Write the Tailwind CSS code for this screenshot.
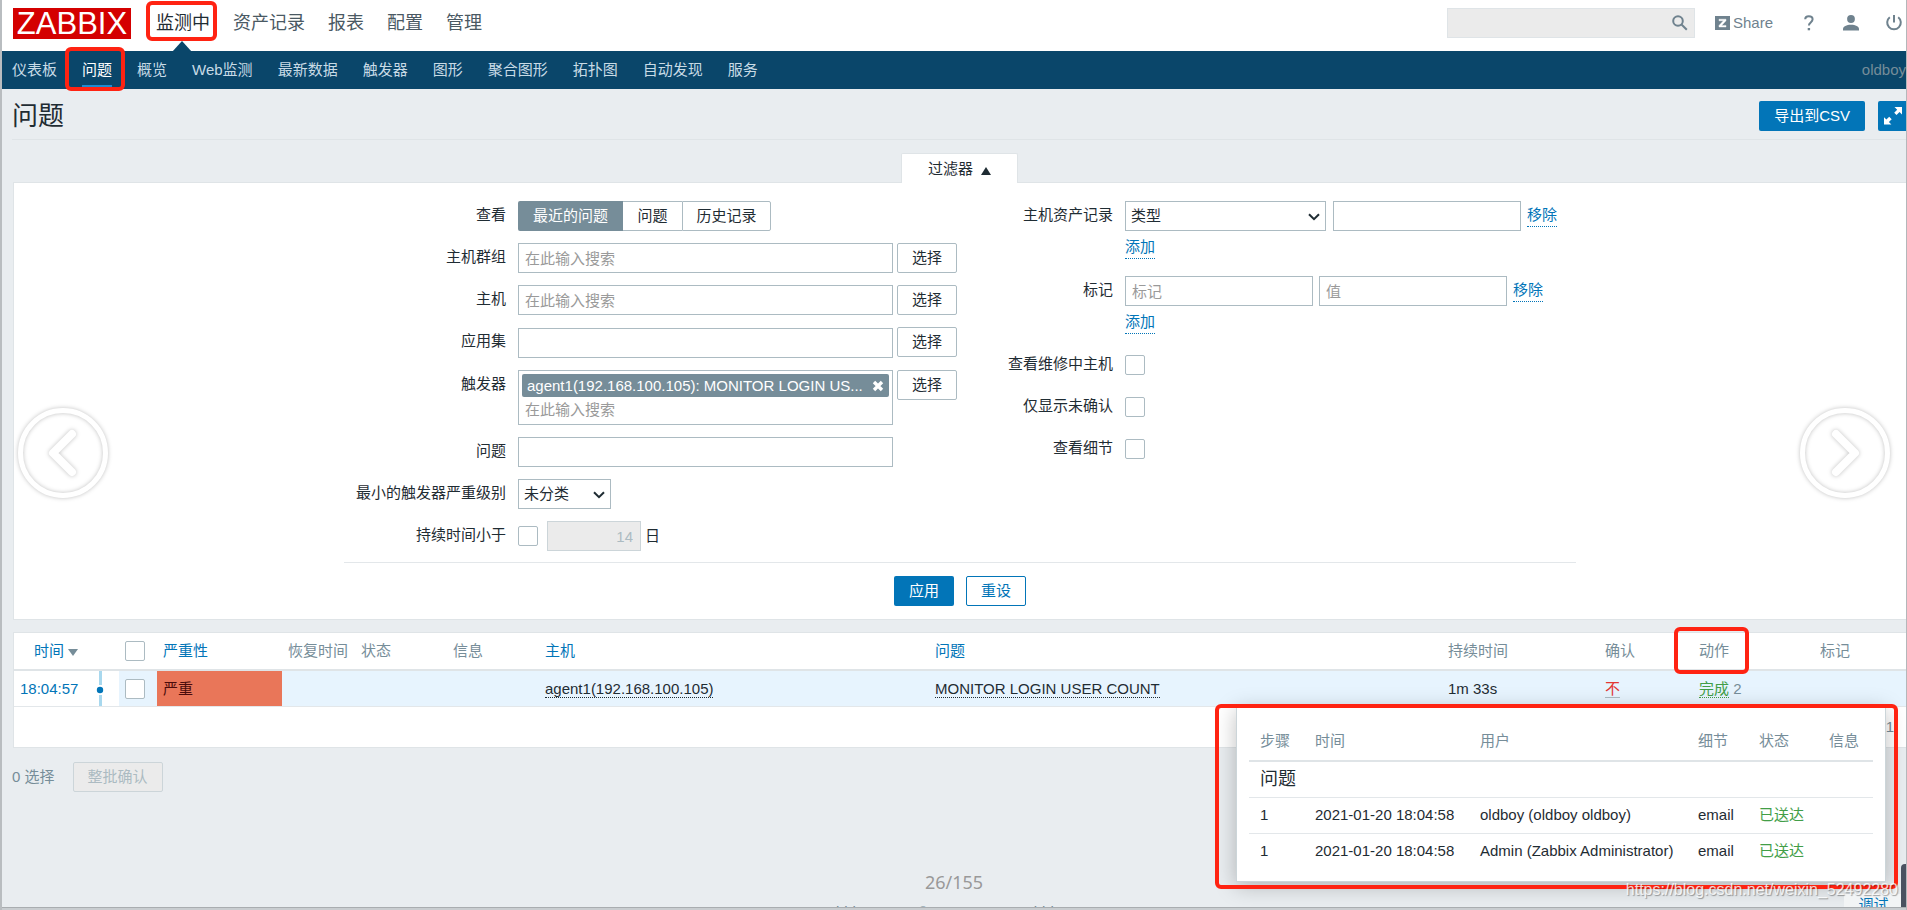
<!DOCTYPE html>
<html lang="zh-CN">
<head>
<meta charset="utf-8">
<title>问题</title>
<script src="https://cdn.jsdelivr.net/npm/@tailwindcss/browser@4"></script>
</head>
<body class="font-['Liberation_Sans','Noto_Sans_CJK_SC',sans-serif] text-[15px] leading-5 text-[#1f2c33]">
<div class="relative flex h-screen flex-col overflow-hidden border-l-2 border-r border-l-[#b9bdc0] border-r-[#b4b7ba] bg-[#e9edf0]">

  <header class="flex h-[51px] shrink-0 items-center bg-white pr-[3px] pl-[11px]">
    <a href="#" class="-mt-1 flex h-[31px] w-[118px] shrink-0 items-center justify-center bg-[#d40000] text-[31px] leading-none text-white">ZABBIX</a>
    <nav class="-mt-[6px] ml-[25px] flex gap-[23px] text-lg text-[#4a5963]">
      <a href="#" class="relative text-[#1f2c33]">监测中
        <svg class="absolute top-8 left-4" width="20" height="11" viewBox="0 0 20 11"><path d="M10 0 20 11H0z" fill="#0a466a"/></svg></a>
      <a href="#">资产记录</a>
      <a href="#">报表</a>
      <a href="#">配置</a>
      <a href="#">管理</a>
    </nav>
    <div class="-mt-[6px] ml-auto flex items-center text-[#6f828e]">
      <div class="relative">
        <input type="text" aria-label="搜索" class="block h-[30px] w-[248px] border border-[#dfe4e7] bg-[#ebebeb] px-2">
        <button type="button" aria-label="搜索" class="absolute top-1.5 right-1.5">
          <svg width="18" height="18" viewBox="0 0 18 18" fill="none" stroke="#6f828e" stroke-width="2"><circle cx="7" cy="7" r="4.8"/><path d="m10.500 10.500 5.300 5.300"/></svg>
        </button>
      </div>
      <a href="#" class="ml-5 flex items-center gap-[3px] text-[15px]">
        <svg width="15" height="14" viewBox="0 0 15 14"><path d="M0 0h15v14H0z" fill="#6f828e"/><path d="M4 3.200h7v1.600L6.600 9.400H11V11H4V9.400l4.400-4.600H4z" fill="#fff" stroke="#fff" stroke-width=".4"/></svg>
        Share</a>
      <button type="button" aria-label="帮助" class="ml-[31px]">
        <svg width="10" height="16" viewBox="0 0 10 16"><path d="M1.200 4.300C1.200 2.200 2.700 1.200 4.800 1.200s3.800 1.100 3.800 3.100c0 3-3.700 3.200-3.700 6.100" fill="none" stroke="#6f828e" stroke-width="2"/><path d="M3.700 13h2.400v2.300H3.700z" fill="#6f828e"/></svg>
      </button>
      <button type="button" aria-label="用户" class="ml-7">
        <svg width="18" height="16" viewBox="0 0 18 16" fill="#6f828e"><circle cx="9" cy="4" r="3.900"/><path d="M1 15.500v-1.500c0-2.600 3.500-4.200 8-4.200s8 1.600 8 4.200v1.500z"/></svg>
      </button>
      <button type="button" aria-label="退出" class="ml-[25px]">
        <svg width="18" height="18" viewBox="0 0 18 18" fill="none" stroke="#6f828e" stroke-width="2"><path d="M9 1v7.500M4.800 3.200a6.800 6.800 0 1 0 8.400 0"/></svg>
      </button>
    </div>
  </header>

  <nav class="flex h-[38px] shrink-0 items-center gap-[25px] bg-[#0a466a] pl-2.5 text-[#c8dbe6]">
    <a href="#">仪表板</a>
    <a href="#" class="relative text-white">问题<span class="absolute inset-x-0 top-[25px] h-0.5 bg-[#1f8bd0]"></span></a>
    <a href="#">概览</a>
    <a href="#">Web监测</a>
    <a href="#">最新数据</a>
    <a href="#">触发器</a>
    <a href="#">图形</a>
    <a href="#">聚合图形</a>
    <a href="#">拓扑图</a>
    <a href="#">自动发现</a>
    <a href="#">服务</a>
    <span class="ml-auto text-[#768d99]">oldboy</span>
  </nav>

  <div class="ml-2.5 flex h-[51px] shrink-0 items-center border-b border-[#dfe4e7]">
    <h1 class="pt-1 text-[26px] leading-8">问题</h1>
    <div class="mt-1 ml-auto flex gap-[13px]">
      <button type="button" class="h-[30px] rounded-xs bg-[#0275b8] px-[15px] text-white">导出到CSV</button>
      <button type="button" aria-label="全屏" class="h-[30px] w-7 rounded-l-xs bg-[#0275b8]">
        <svg class="ml-1.5" width="18" height="18" viewBox="0 0 18 18" fill="#fff"><path d="M10.500 0H18v7.500l-2.500-2.500-3 3-2.300-2.300 3-3zM0 10.300l2.400 2.300 2.800-2.800 2.500 2.500-2.800 2.800 2.500 2.500H0z"/></svg>
      </button>
    </div>
  </div>

  <section class="ml-[11px] shrink-0 pt-[13px]">
    <div class="flex justify-center">
      <button type="button" class="relative z-10 -mb-px flex h-[30px] w-[117px] items-center justify-center gap-2 rounded-t-xs border border-b-0 border-[#dfe4e7] bg-white">过滤器
        <svg class="mt-1" width="10" height="8" viewBox="0 0 10 8"><path d="M5 0l5 8H0z" fill="#1f2c33"/></svg></button>
    </div>
    <form class="border border-r-0 border-[#dfe4e7] bg-white pt-[18px]">
      <div class="mx-auto grid max-w-[1232px] grid-cols-2 border-b border-[#e3e7ea] pb-[11px]">
        <div class="grid grid-cols-[162px_1fr] content-start gap-x-3 gap-y-3">
          <span class="pt-1 text-right">查看</span>
          <div class="flex h-[30px]">
            <button type="button" class="w-[105px] rounded-l-xs bg-[#768d99] text-white">最近的问题</button>
            <button type="button" class="w-[59px] border-y border-[#acbbc2]">问题</button>
            <button type="button" class="w-[89px] rounded-r-xs border border-[#acbbc2]">历史记录</button>
          </div>
          <label for="groups" class="pt-1 text-right">主机群组</label>
          <div class="flex gap-1">
            <input id="groups" type="text" placeholder="在此输入搜索" class="h-[30px] w-[375px] border border-[#acbbc2] px-1.5 placeholder:text-[#9a9a9a]">
            <button type="button" class="h-[30px] w-[60px] rounded-xs border border-[#acbbc2]">选择</button>
          </div>
          <label for="hosts" class="pt-1 text-right">主机</label>
          <div class="flex gap-1">
            <input id="hosts" type="text" placeholder="在此输入搜索" class="h-[30px] w-[375px] border border-[#acbbc2] px-1.5 placeholder:text-[#9a9a9a]">
            <button type="button" class="h-[30px] w-[60px] rounded-xs border border-[#acbbc2]">选择</button>
          </div>
          <label for="app" class="pt-1 text-right">应用集</label>
          <div class="flex h-[31px] items-end gap-1">
            <input id="app" type="text" class="h-[30px] w-[375px] border border-[#acbbc2] px-1.5">
            <button type="button" class="h-[30px] w-[60px] self-start rounded-xs border border-[#acbbc2]">选择</button>
          </div>
          <label for="triggers" class="pt-1 text-right">触发器</label>
          <div class="flex items-start gap-1">
            <div class="h-[55px] w-[375px] border border-[#acbbc2] p-[3px]">
              <div class="flex h-[23px] items-center justify-between rounded-xs bg-[#768d99] px-[5px] text-white">
                <span>agent1(192.168.100.105): MONITOR LOGIN US...</span>
                <button type="button" aria-label="移除"><svg width="12" height="12" viewBox="0 0 12 12"><path d="m2 2 8 8M10 2l-8 8" stroke="#fff" stroke-width="3.400"/></svg></button>
              </div>
              <input id="triggers" type="text" placeholder="在此输入搜索" class="block h-6 w-full px-[3px] placeholder:text-[#9a9a9a]">
            </div>
            <button type="button" class="h-[30px] w-[60px] rounded-xs border border-[#acbbc2]">选择</button>
          </div>
          <label for="problem" class="pt-1 text-right">问题</label>
          <input id="problem" type="text" class="h-[30px] w-[375px] border border-[#acbbc2] px-1.5">
          <label for="severity" class="pt-1 text-right">最小的触发器严重级别</label>
          <div class="relative w-[93px]">
            <select id="severity" class="block h-[30px] w-full appearance-none border border-[#acbbc2] px-[5px]"><option>未分类</option></select>
            <svg class="pointer-events-none absolute top-3 right-1.5" width="12" height="8" viewBox="0 0 12 8"><path d="m1 1.200 5 5 5-5" fill="none" stroke="#1f2c33" stroke-width="2"/></svg>
          </div>
          <label for="age" class="pt-1 text-right">持续时间小于</label>
          <div class="flex items-center">
            <input id="age" type="checkbox" class="size-5 appearance-none rounded-xs border border-[#acbbc2] bg-white">
            <input type="text" disabled value="14" aria-label="天数" class="ml-[9px] h-[30px] w-[94px] border border-[#ccd5d9] bg-[#ebebeb] px-[7px] text-right text-[#acbbc2]">
            <span class="ml-1">日</span>
          </div>
        </div>

        <div class="grid grid-cols-[153px_1fr] content-start gap-x-3">
          <label for="inv" class="pt-1 text-right">主机资产记录</label>
          <div class="h-[75px]">
            <div class="flex">
              <div class="relative w-[201px]">
                <select id="inv" class="block h-[30px] w-full appearance-none border border-[#acbbc2] px-[5px]"><option>类型</option></select>
                <svg class="pointer-events-none absolute top-3 right-1.5" width="12" height="8" viewBox="0 0 12 8"><path d="m1 1.200 5 5 5-5" fill="none" stroke="#1f2c33" stroke-width="2"/></svg>
              </div>
              <input type="text" aria-label="资产值" class="ml-[7px] h-[30px] w-[188px] border border-[#acbbc2] px-1.5">
              <a href="#" class="mt-1 ml-1.5 h-[22px] border-b border-dotted border-[#0275b8] text-[#0275b8]">移除</a>
            </div>
            <a href="#" class="mt-1.5 inline-block h-[22px] border-b border-dotted border-[#0275b8] text-[#0275b8]">添加</a>
          </div>
          <label for="tag" class="pt-1 text-right">标记</label>
          <div class="h-[74px]">
            <div class="flex">
              <input id="tag" type="text" placeholder="标记" class="h-[30px] w-[188px] border border-[#acbbc2] px-1.5 placeholder:text-[#9a9a9a]">
              <input type="text" placeholder="值" aria-label="值" class="ml-1.5 h-[30px] w-[188px] border border-[#acbbc2] px-1.5 placeholder:text-[#9a9a9a]">
              <a href="#" class="mt-1 ml-1.5 h-[22px] border-b border-dotted border-[#0275b8] text-[#0275b8]">移除</a>
            </div>
            <a href="#" class="mt-1.5 inline-block h-[22px] border-b border-dotted border-[#0275b8] text-[#0275b8]">添加</a>
          </div>
          <label for="maint" class="h-[42px] pt-1 text-right">查看维修中主机</label>
          <input id="maint" type="checkbox" class="mt-[5px] size-5 appearance-none rounded-xs border border-[#acbbc2]">
          <label for="unack" class="h-[42px] pt-1 text-right">仅显示未确认</label>
          <input id="unack" type="checkbox" class="mt-[5px] size-5 appearance-none rounded-xs border border-[#acbbc2]">
          <label for="details" class="pt-1 text-right">查看细节</label>
          <input id="details" type="checkbox" class="mt-[5px] size-5 appearance-none rounded-xs border border-[#acbbc2]">
        </div>
      </div>
      <div class="flex justify-center gap-3 py-[13px]">
        <button type="button" class="h-[30px] w-[60px] rounded-xs bg-[#0275b8] text-white">应用</button>
        <button type="button" class="h-[30px] w-[60px] rounded-xs border border-[#0275b8] text-[#0275b8]">重设</button>
      </div>
    </form>
  </section>

  <section class="mt-3 ml-[11px] shrink-0 border border-r-0 border-[#dfe4e7] bg-white">
    <table class="w-full table-fixed border-collapse text-left">
      <colgroup>
        <col class="w-[73px]"><col class="w-8"><col class="w-[38px]"><col class="w-[125px]"><col class="w-[73px]"><col class="w-[92px]"><col class="w-[92px]"><col class="w-[390px]"><col><col class="w-[157px]"><col class="w-[94px]"><col class="w-[121px]"><col class="w-[92px]">
      </colgroup>
      <thead>
        <tr class="h-[37px] border-b-2 border-[#dfe4e7] text-[#768d99] *:px-1.5 *:font-normal *:whitespace-nowrap">
          <th><a href="#" class="flex items-center gap-1 pl-[14px] text-[#0275b8]">时间<svg class="mt-0.5 shrink-0" width="10" height="7" viewBox="0 0 10 7"><path d="M0 0h10L5 7z" fill="#768d99"/></svg></a></th>
          <th></th>
          <th><input type="checkbox" aria-label="全选" class="block size-5 appearance-none rounded-xs border border-[#acbbc2]"></th>
          <th><a href="#" class="text-[#0275b8]">严重性</a></th>
          <th>恢复时间</th>
          <th>状态</th>
          <th>信息</th>
          <th><a href="#" class="text-[#0275b8]">主机</a></th>
          <th><a href="#" class="text-[#0275b8]">问题</a></th>
          <th>持续时间</th>
          <th>确认</th>
          <th>动作</th>
          <th>标记</th>
        </tr>
      </thead>
      <tbody>
        <tr class="h-9 border-b border-[#e3e7ea] bg-[#e7f4fe] *:px-1.5 *:whitespace-nowrap">
          <td class="bg-white"><a href="#" class="text-[#0275b8]">18:04:57</a></td>
          <td class="bg-white"><svg class="ml-[3px] block" width="10" height="35" viewBox="0 0 10 35"><path d="M3 0h3v14H3zM3 24h3v11H3z" fill="#a8d8ee"/><circle cx="4" cy="19" r="3.200" fill="#0275b8"/></svg></td>
          <td><input type="checkbox" aria-label="选择问题" class="block size-5 appearance-none rounded-xs border border-[#acbbc2] bg-white"></td>
          <td class="bg-[#e97659] text-[#4b0c0c]">严重</td>
          <td></td><td></td><td></td>
          <td><a href="#" class="inline-block h-[19px] border-b border-dotted border-[#1f2c33]">agent1(192.168.100.105)</a></td>
          <td><a href="#" class="inline-block h-[19px] border-b border-dotted border-[#1f2c33]">MONITOR LOGIN USER COUNT</a></td>
          <td>1m 33s</td>
          <td><a href="#" class="inline-block h-[19px] border-b border-[#acbbc2] text-[#e33734]">不</a></td>
          <td class="text-[#768d99]"><a href="#" class="inline-block h-[19px] border-b border-dotted border-[#429e47] text-[#429e47]">完成</a> 2</td>
          <td></td>
        </tr>
      </tbody>
    </table>
    <div class="h-10 py-2.5 pr-3 text-right text-[#768d99]">1</div>
  </section>

  <div class="mt-3.5 ml-2.5 flex shrink-0 items-center gap-[18px] text-[#768d99]">
    <span>0 选择</span>
    <button type="button" disabled class="h-[30px] w-[90px] rounded-xs border border-[#ccd5d9] bg-[#ebebeb] text-[#acbbc2]">整批确认</button>
  </div>

  <footer class="mt-[110px] shrink-0 text-center text-[#768d99]">Zabbix 3.4.15. © 2001–2018, Zabbix SIA</footer>

  <!-- Action details popup -->
  <div class="absolute top-[706px] right-5 w-[650px] border border-[#ccd5d9] bg-white px-3 pt-[14px] pb-3 shadow-[0_4px_20px_rgba(0,0,0,0.25)]">
    <table class="w-full table-fixed border-collapse text-left">
      <colgroup><col class="w-[55px]"><col class="w-[165px]"><col><col class="w-[61px]"><col class="w-[70px]"><col class="w-[55px]"></colgroup>
      <thead><tr class="h-10 border-b-2 border-[#dfe4e7] text-[#768d99] *:px-[11px] *:font-normal *:whitespace-nowrap"><th>步骤</th><th>时间</th><th>用户</th><th>细节</th><th>状态</th><th>信息</th></tr></thead>
      <tbody class="*:border-b *:border-[#e3e7ea]">
        <tr class="h-9"><td colspan="6" class="px-[11px] text-lg leading-5">问题</td></tr>
        <tr class="h-9 *:px-[11px] *:whitespace-nowrap"><td>1</td><td>2021-01-20 18:04:58</td><td>oldboy (oldboy oldboy)</td><td>email</td><td class="text-[#429e47]">已送达</td><td></td></tr>
        <tr class="h-9 border-b-0! *:px-[11px] *:whitespace-nowrap"><td>1</td><td>2021-01-20 18:04:58</td><td>Admin (Zabbix Administrator)</td><td>email</td><td class="text-[#429e47]">已送达</td><td></td></tr>
      </tbody>
    </table>
  </div>

  <!-- Gallery arrows and page counter -->
  <button type="button" aria-label="上一张" class="absolute top-[401px] left-[9px]">
    <svg class="drop-shadow-[0_0_2px_rgba(0,0,0,0.25)]" width="104" height="104" viewBox="0 0 104 104" fill="none" stroke="#fff"><circle cx="52" cy="52" r="42.500" stroke-width="5"/><path d="M61 33 42 52l19 19" stroke-width="8" stroke-linecap="round" stroke-linejoin="round"/></svg>
  </button>
  <button type="button" aria-label="下一张" class="absolute top-[401px] right-[9px]">
    <svg class="drop-shadow-[0_0_2px_rgba(0,0,0,0.25)]" width="104" height="104" viewBox="0 0 104 104" fill="none" stroke="#fff"><circle cx="52" cy="52" r="42.500" stroke-width="5"/><path d="M43 33l19 19-19 19" stroke-width="8" stroke-linecap="round" stroke-linejoin="round"/></svg>
  </button>
  <div class="absolute inset-x-0 bottom-4 text-center font-['Noto_Sans',sans-serif] text-lg leading-6 text-[#999]">26/155</div>

  <button type="button" class="absolute right-0 -bottom-1.5 h-[22px] w-[62px] bg-[#f2f4f5] pr-[3px] text-[#0275b8]">调试</button>

  <!-- Highlight frames -->
  <div class="absolute top-px left-36 h-10 w-[71px] rounded-md border-4 border-[#ff2312]"></div>
  <div class="absolute top-[47px] left-[63px] h-11 w-[60px] rounded-md border-4 border-[#ff2312]"></div>
  <div class="absolute top-[627px] right-[157px] h-[47px] w-[75px] rounded-md border-4 border-[#ff2312]"></div>
  <div class="absolute top-[704px] right-2 h-[185px] w-[683px] rounded-md border-4 border-[#ff2312]"></div>

  <div class="absolute right-2 bottom-2.5 text-base leading-5 text-white/80 [text-shadow:1px_1px_1px_rgba(0,0,0,0.35)]">https://blog.csdn.net/weixin_52492280</div>
  <div class="absolute right-0 bottom-0 h-[46px] w-[5px] rounded-tl-sm bg-[#4a5160]"></div>
  <div class="absolute inset-x-0 bottom-0 h-[3px] border-t border-[#a9adb0] bg-[#c9cdd0]"></div>
</div>
</body>
</html>
